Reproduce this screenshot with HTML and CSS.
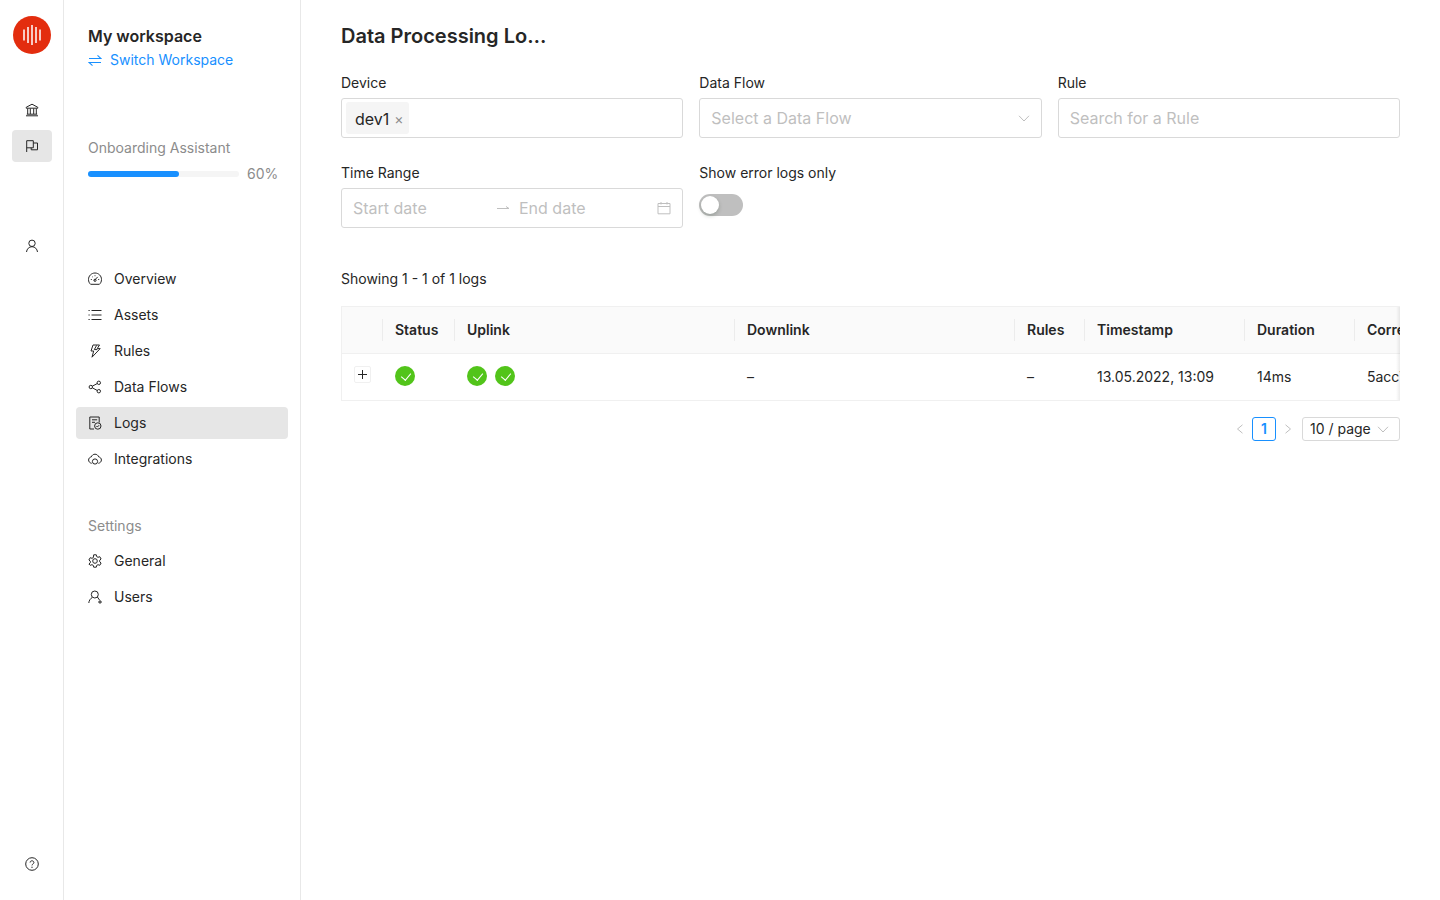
FILE: index.html
```html
<!DOCTYPE html>
<html lang="en">
  <head>
    <meta charset="UTF-8" />
    <meta name="viewport" content="width=device-width, initial-scale=1.0" />
    <title>Data Processing Logs</title>
    <link rel="stylesheet" href="styles.css">
  </head>
  <body>
    <nav class="rail">
      <div class="logo">
        <svg width="38" height="38" viewBox="0 0 38 38"><circle cx="19" cy="19" r="19" fill="#e32d0e"/><path d="M11 13.500v11M15 11v16M19 9v20M23 11v16M27 13.500v11" stroke="#fff" stroke-width="1.500" fill="none"/></svg>
      </div>
      <a class="rail-btn rail-first">
        <svg class="icon" viewBox="0 0 14 14"><path d="M7 1.200 1.200 4.300v.9h11.600v-.9zM2.700 5.500v5.500M5.300 5.500v5.500M8.700 5.500v5.500M11.300 5.500v5.500M1.800 11.200h10.400M1 12.800h12"/></svg>
      </a>
      <a class="rail-btn active">
        <svg class="icon" viewBox="0 0 14 14"><path d="M1.700 13V1.700h6.600v7.100H1.700M8.300 4h4.200v6.800H6.200V8.800"/></svg>
      </a>
      <a class="rail-btn rail-user">
        <svg class="icon" viewBox="0 0 14 14"><circle cx="7" cy="4.300" r="3.200"/><path d="M1.500 13c.3-3 2.500-5.300 5.500-5.300s5.200 2.300 5.500 5.300"/></svg>
      </a>
      <a class="rail-btn rail-help">
        <svg class="icon" viewBox="0 0 14 14"><circle cx="7" cy="7" r="6.300"/><path d="M5.100 5.500C5.100 4.400 6 3.800 7 3.800s1.900.7 1.900 1.700c0 1.400-1.900 1.500-1.900 2.900"/><path d="M7 9.700v1" stroke-width="1.300"/></svg>
      </a>
    </nav>

    <aside class="sidebar">
      <div class="workspace">
        <div class="workspace-name">My workspace</div>
        <a class="switch">
          <svg width="14" height="14" viewBox="0 0 14 14" fill="none" stroke="#1890ff" stroke-width="1.100"><path d="M1 5.500h12L9.500 2.300M13 9.500H1l3.500 3.200"/></svg>
          Switch Workspace
        </a>
      </div>
      <div class="onboarding">
        <div class="muted">Onboarding Assistant</div>
        <div class="progress">
          <div class="progress-track"><div class="progress-bar"></div></div>
          <span class="progress-text">60%</span>
        </div>
      </div>
      <ul class="menu">
        <li><svg class="icon" viewBox="0 0 14 14"><path d="M2.600 12.300C1.300 11.200.5 9.500.5 7.500.5 3.900 3.400 1 7 1s6.500 2.900 6.500 6.500c0 2-.8 3.700-2.100 4.800z"/><path d="M6.200 8.600 9.700 4.900M2.800 7.500h1M10.200 7.500h1M4.200 4.600l.6.600M7 3.300v.9"/><circle cx="7" cy="8.300" r="1.100"/></svg>Overview</li>
        <li><svg class="icon" viewBox="0 0 14 14"><path d="M3.500 2.500h10M3.500 7h10M3.500 11.500h10M.5 2.500h1.200M.5 7h1.200M.5 11.500h1.200"/></svg>Assets</li>
        <li><svg class="icon" viewBox="0 0 14 14"><path d="M5 1h6.500L9.200 4.600h3L4 13.200l1.700-6.200H3zM8.600 1.400 6.300 5.600h3"/></svg>Rules</li>
        <li><svg class="icon" viewBox="0 0 14 14"><circle cx="2.800" cy="7" r="1.700"/><circle cx="10.800" cy="2.800" r="1.700"/><circle cx="10.800" cy="11.200" r="1.700"/><path d="M4.300 6.200 9.300 3.500M4.300 7.800l5 2.700"/></svg>Data Flows</li>
        <li class="selected"><svg class="icon" viewBox="0 0 14 14"><path d="M6 13H1.800V1h9.400v5.500M4 3.800h5.200M4 6.300h3"/><circle cx="9.800" cy="10" r="3.200"/><path d="m8.400 10 1 1 1.700-1.800"/></svg>Logs</li>
        <li><svg class="icon" viewBox="0 0 14 14"><path d="M3.700 11.300C1.900 11 .6 9.700.6 8c0-1.600 1.200-2.900 2.700-3.100C3.900 3.200 5.300 2.200 7 2.200s3.100 1 3.700 2.700c1.500.2 2.700 1.500 2.700 3.100 0 1.700-1.300 3-3.100 3.300"/><circle cx="7" cy="9.500" r="2.600"/></svg>Integrations</li>
      </ul>
      <div class="muted settings-title">Settings</div>
      <ul class="menu">
        <li><svg class="icon" viewBox="0 0 14 14"><path d="M5.700.8h2.600l.4 1.800 1.300.7 1.800-.6 1.300 2.300-1.400 1.200v1.600l1.400 1.200-1.300 2.300-1.800-.6-1.300.7-.4 1.800H5.700l-.4-1.800-1.300-.7-1.800.6L.9 10l1.400-1.200V7.200L.9 6l1.300-2.300 1.800.6 1.300-.7z"/><circle cx="7" cy="7" r="2.300"/></svg>General</li>
        <li><svg class="icon" viewBox="0 0 14 14"><circle cx="6.800" cy="4.500" r="3.500"/><path d="M4.200 7.500C2.300 8.600 1 10.600.8 13M9.400 7 11.500 10M10 12h4M12 10v3.800"/></svg>Users</li>
      </ul>
    </aside>

    <main class="content">
      <h1>Data Processing Lo…</h1>

      <div class="filters">
        <div class="field">
          <label>Device</label>
          <div class="input">
            <span class="tag">dev1 <span class="tag-x">×</span></span>
          </div>
        </div>
        <div class="field">
          <label>Data Flow</label>
          <div class="input input-text">
            <span class="placeholder">Select a Data Flow</span>
            <svg class="chevron" width="12" height="12" viewBox="0 0 12 12"><path d="M1 3.800 6 9l5-5.200"/></svg>
          </div>
        </div>
        <div class="field">
          <label>Rule</label>
          <div class="input input-text"><span class="placeholder">Search for a Rule</span></div>
        </div>
        <div class="field">
          <label>Time Range</label>
          <div class="input input-text range">
            <span class="placeholder range-part">Start date</span>
            <svg class="range-arrow" width="14" height="14" viewBox="0 0 14 14"><path d="M1 7.500h12L10 5.500"/></svg>
            <span class="placeholder range-part">End date</span>
            <svg class="calendar" width="14" height="14" viewBox="0 0 14 14"><path d="M1 2.500h12v10.300H1zM1 5.500h12M4 1v2.500M10 1v2.500"/></svg>
          </div>
        </div>
        <div class="field">
          <label>Show error logs only</label>
          <div class="switch-toggle"><span class="switch-handle"></span></div>
        </div>
      </div>

      <p class="count">Showing 1 - 1 of 1 logs</p>

      <div class="table-wrap">
        <table>
          <colgroup>
            <col class="col-expand"><col class="col-status"><col class="col-link"><col class="col-link">
            <col class="col-rules"><col class="col-time"><col class="col-duration"><col class="col-corr">
          </colgroup>
          <thead>
            <tr>
              <th></th><th>Status</th><th>Uplink</th><th>Downlink</th>
              <th>Rules</th><th>Timestamp</th><th>Duration</th><th>Correlation ID</th>
            </tr>
          </thead>
          <tbody>
            <tr>
              <td class="cell-expand"><span class="expand"></span></td>
              <td><span class="ok"></span></td>
              <td><span class="ok"></span><span class="ok"></span></td>
              <td>–</td>
              <td>–</td>
              <td>13.05.2022, 13:09</td>
              <td>14ms</td>
              <td>5acc71e2b0</td>
            </tr>
          </tbody>
        </table>
      </div>

      <div class="pagination">
        <svg class="page-arrow" width="10" height="10" viewBox="0 0 10 10"><path d="M7.500.8 2.500 5l5 4.200"/></svg>
        <span class="page-num">1</span>
        <svg class="page-arrow" width="10" height="10" viewBox="0 0 10 10"><path d="M2.500.8l5 4.200-5 4.200"/></svg>
        <span class="page-size">10 / page
          <svg class="chevron" width="12" height="12" viewBox="0 0 12 12"><path d="M1 3.800 6 9l5-5.200"/></svg>
        </span>
      </div>
    </main>
  </body>
</html>
```

FILE: styles.css
```css
* {
  box-sizing: border-box;
}
body {
  margin: 0;
  height: 900px;
  display: flex;
  overflow: hidden;
  font-family: Inter, "Liberation Sans", sans-serif;
  font-size: 14px;
  line-height: 22px;
  color: #262626;
  background: #fff;
}
.icon {
  width: 14px;
  height: 14px;
  flex: none;
  fill: none;
  stroke: #262626;
  stroke-width: 1;
}

/* icon rail */
.rail {
  width: 64px;
  flex: none;
  height: 100%;
  border-right: 1px solid #e8e8e8;
  display: flex;
  flex-direction: column;
  align-items: center;
  padding-top: 16px;
}
.logo {
  height: 38px;
}
.rail-btn {
  width: 40px;
  height: 32px;
  border-radius: 4px;
  display: flex;
  align-items: center;
  justify-content: center;
}
.rail-btn.active {
  background: #e6e6e6;
  margin-top: 4px;
}
.rail-first {
  margin-top: 40px;
}
.rail-user {
  margin-top: 68px;
}
.rail-help {
  margin-top: auto;
  margin-bottom: 20px;
}

/* second sidebar */
.sidebar {
  width: 237px;
  flex: none;
  height: 100%;
  border-right: 1px solid #e8e8e8;
  padding: 25px 12px 0;
}
.workspace {
  padding-left: 12px;
}
.workspace-name {
  font-size: 16px;
  font-weight: 600;
  line-height: 22px;
}
.switch {
  display: flex;
  align-items: center;
  gap: 8px;
  color: #1890ff;
  line-height: 22px;
  margin-top: 2px;
}
.onboarding {
  margin-top: 66px;
  padding-left: 12px;
}
.muted {
  color: #8c8c8c;
}
.progress {
  display: flex;
  align-items: center;
  gap: 8px;
  margin-top: 4px;
}
.progress-track {
  width: 151px;
  height: 6px;
  border-radius: 3px;
  background: #f5f5f5;
}
.progress-bar {
  width: 60%;
  height: 6px;
  border-radius: 3px;
  background: #1890ff;
}
.progress-text {
  color: #8c8c8c;
}
.menu {
  list-style: none;
  margin: 0;
  padding: 0;
}
.sidebar > .menu:first-of-type {
  margin-top: 78px;
}
.menu li {
  height: 32px;
  margin-bottom: 4px;
  padding-left: 12px;
  border-radius: 4px;
  display: flex;
  align-items: center;
  gap: 12px;
}
.menu li.selected {
  background: #e6e6e6;
}
.settings-title {
  padding-left: 12px;
  margin-top: 40px;
  margin-bottom: 8px;
}

/* main */
.content {
  flex: 1;
  min-width: 0;
  padding: 24px 40px 0;
}
h1 {
  margin: 0;
  font-size: 20px;
  font-weight: 600;
  line-height: 24px;
}
.filters {
  display: grid;
  grid-template-columns: repeat(3, minmax(0, 1fr));
  column-gap: 16px;
  row-gap: 24px;
  margin-top: 24px;
}
.field label {
  display: block;
  height: 22px;
  margin-bottom: 4px;
}
.input {
  height: 40px;
  border: 1px solid #d9d9d9;
  border-radius: 3px;
  display: flex;
  align-items: center;
  padding: 0 4px;
  font-size: 16px;
}
.input-text {
  padding: 0 11px;
  justify-content: space-between;
}
.placeholder {
  color: #bfbfbf;
}
.tag {
  height: 32px;
  padding: 1px 5px 0 9px;
  background: #f5f5f5;
  border-radius: 3px;
  display: flex;
  align-items: center;
  gap: 5px;
  line-height: 30px;
}
.tag-x {
  color: #8c8c8c;
  font-size: 14px;
}
.chevron,
.page-arrow,
.calendar,
.range-arrow {
  fill: none;
  stroke: #bfbfbf;
  stroke-width: 1;
  flex: none;
}
.range {
  justify-content: flex-start;
}
.range-part {
  width: 100px;
}
.range-arrow {
  margin-right: 9px;
}
.range-part:first-child {
  width: 143px;
}
.calendar {
  margin-left: auto;
}
.switch-toggle {
  width: 44px;
  height: 22px;
  margin-top: 10px;
  border-radius: 11px;
  background: #bfbfbf;
  padding: 2px;
}
.switch-handle {
  display: block;
  width: 18px;
  height: 18px;
  border-radius: 50%;
  background: #fff;
  box-shadow: 0 2px 4px rgba(0, 35, 11, 0.2);
}
.count {
  margin: 40px 0 16px;
  line-height: 22px;
}

/* table */
.table-wrap {
  position: relative;
  overflow: hidden;
  border: 1px solid #f0f0f0;
  border-right: 0;
}
.table-wrap::after {
  content: "";
  position: absolute;
  top: 0;
  right: 0;
  bottom: 0;
  width: 4px;
  background: linear-gradient(to right, rgba(0, 0, 0, 0), rgba(0, 0, 0, 0.08));
}
table {
  border-collapse: collapse;
  table-layout: fixed;
  width: 1214px;
}
.col-expand { width: 41px; }
.col-status { width: 72px; }
.col-link { width: 280px; }
.col-rules { width: 70px; }
.col-time { width: 160px; }
.col-duration { width: 110px; }
.col-corr { width: 201px; }
th {
  height: 46px;
  padding: 1px 12px 0;
  background: #fafafa;
  border-bottom: 1px solid #f0f0f0;
  text-align: left;
  font-weight: 600;
  position: relative;
  white-space: nowrap;
}
th + th::before {
  content: "";
  position: absolute;
  left: -1px;
  top: 12px;
  height: 22px;
  width: 1px;
  background: #ececec;
}
td {
  height: 47px;
  padding: 0 12px;
  white-space: nowrap;
  overflow: hidden;
}
.cell-expand {
  padding: 0 0 4px 12px;
}
.expand {
  display: block;
  width: 17px;
  height: 17px;
  border: 1px solid #f0f0f0;
  border-radius: 2px;
  background:
    linear-gradient(#262626, #262626) center / 9px 1px no-repeat,
    linear-gradient(#262626, #262626) center / 1px 9px no-repeat;
}
.ok {
  display: inline-block;
  position: relative;
  top: -2px;
  width: 20px;
  height: 20px;
  border-radius: 50%;
  background: #52c41a;
  margin-right: 8px;
  vertical-align: middle;
}
.ok::after {
  content: "";
  position: absolute;
  left: 7.500px;
  top: 5px;
  width: 5px;
  height: 8px;
  border: solid #fff;
  border-width: 0 1.300px 1.300px 0;
  transform: rotate(40deg);
}

/* pagination */
.pagination {
  display: flex;
  align-items: center;
  justify-content: flex-end;
  margin-top: 16px;
}
.page-arrow {
  margin: 0 7px;
}
.page-num {
  width: 24px;
  height: 24px;
  border: 1px solid #1890ff;
  border-radius: 3px;
  color: #1890ff;
  font-weight: 600;
  text-align: center;
  line-height: 22px;
}
.page-size {
  width: 98px;
  height: 24px;
  margin-left: 2px;
  border: 1px solid #d9d9d9;
  border-radius: 3px;
  padding: 0 10px 0 7px;
  display: flex;
  align-items: center;
  justify-content: space-between;
}
```
